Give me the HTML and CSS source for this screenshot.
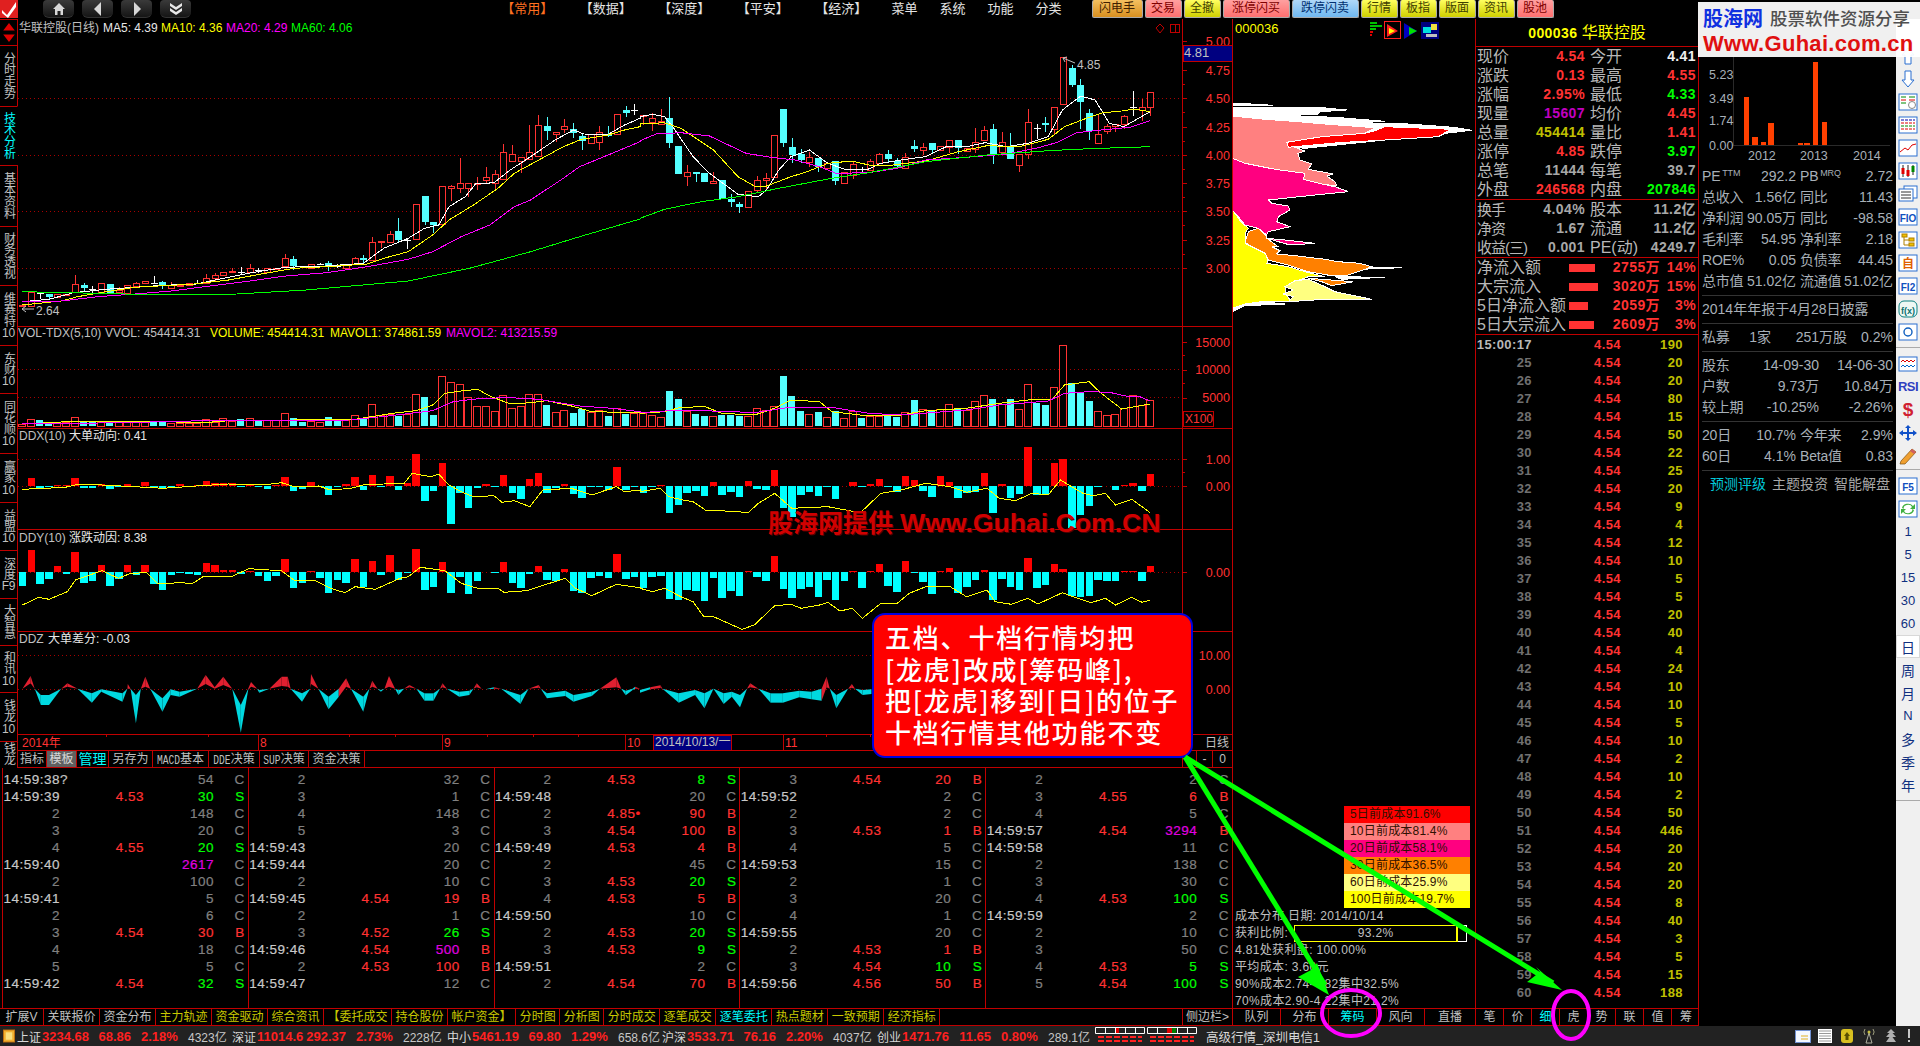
FILE: index.html
```html
<!DOCTYPE html>
<html lang="zh">
<head>
<meta charset="utf-8">
<title>华联控股 行情</title>
<link rel="stylesheet" href="styles.css">
</head>
<body>
<header class="topbar">
  <svg class="logo" viewBox="0 0 18 18"><rect width="18" height="18" fill="#e02020"/><path d="M2 10 L7 15 L16 2 L16 7 L8 18 L2 13Z" fill="#fff"/></svg>
  <nav class="navbtns">
    <span class="nb"><svg viewBox="0 0 16 14"><path d="M8 1 L14 7 H12 V13 H9.5 V9 H6.5 V13 H4 V7 H2Z" fill="#d8d8d8"/></svg></span>
    <span class="nb"><svg viewBox="0 0 16 14"><path d="M11 0 V14 L4 7Z" fill="#d8d8d8"/></svg></span>
    <span class="nb"><svg viewBox="0 0 16 14"><path d="M5 0 V14 L12 7Z" fill="#d8d8d8"/></svg></span>
    <span class="nb"><svg viewBox="0 0 16 14"><path d="M2 1 L8 5 L14 1 V4 L8 8 L2 4Z M2 6 L8 10 L14 6 V9 L8 13 L2 9Z" fill="#e8e8e8"/></svg></span>
  </nav>
  <div class="menus">
    <span class="mb orange">【常用】</span><span class="mb">【数据】</span><span class="mb">【深度】</span><span class="mb">【平安】</span><span class="mb">【经济】</span>
    <span class="mi">菜单</span><span class="mi">系统</span><span class="mi">功能</span><span class="mi">分类</span>
  </div>
  <div class="tbtns">
    <span class="tb w51 g-orange">闪电手</span><span class="tb w37 g-salmon">交易</span><span class="tb w37 g-yellow">全撤</span><span class="tb w67 g-salmon">涨停闪买</span><span class="tb w67 g-blue">跌停闪卖</span><span class="tb w37 g-yellow">行情</span><span class="tb w37 g-yellow">板指</span><span class="tb w37 g-yellow">版面</span><span class="tb w37 g-yellow">资讯</span><span class="tb w37 g-salmon">股池</span>
  </div>
</header>

<main class="main">
  <div class="workspace">
    <div class="upper">
      <section class="leftcol">
        <div class="chartrow">
          <aside class="vstrip">
            <div class="vt h26 updown"><svg viewBox="0 0 16 26"><path d="M8 3 L14 11 H2Z M2 15 H14 L8 23Z" fill="#e00000"/></svg></div>
            <div class="vt h61"><span class="vtx">分时走势</span></div>
            <div class="vt h59 cyan"><span class="vtx">技术分析</span></div>
            <div class="vt h61"><span class="vtx">基本资料</span></div>
            <div class="vt h59"><span class="vtx">财务透视</span></div>
            <div class="vt h60"><span class="vtx">维赛特</span><span>10</span></div>
            <div class="vt h48"><span class="vtx">东财</span><span>10</span></div>
            <div class="vt h60"><span class="vtx">同花顺</span><span>10</span></div>
            <div class="vt h49"><span class="vtx">赢家</span><span>10</span></div>
            <div class="vt h48"><span class="vtx">益盟</span><span>10</span></div>
            <div class="vt h48"><span class="vtx">深度</span><span>F9</span></div>
            <div class="vt h47"><span class="vtx">大智慧</span></div>
            <div class="vt h47"><span class="vtx">和讯</span><span>10</span></div>
            <div class="vt h49"><span class="vtx">钱龙</span><span>10</span></div>
            <div class="vt h27"><span class="vtx">钱龙</span></div>
          </aside>
          <div class="chartcol">
            <svg id="chart" class="chart" viewBox="18 19 1214 731" width="1214" height="731"></svg>
            <div class="ibar">
              <span class="it i29">指标</span><span class="it i30 sel">模板</span><span class="it i32 cyan">管理</span><span class="it i44">另存为</span><span class="it i56"><span class="mn">MACD</span>基本</span><span class="it i51"><span class="mn">DDE</span>决策</span><span class="it i49"><span class="mn">SUP</span>决策</span><span class="it i56">资金决策</span>
              <span class="it rc first"></span><span class="it rc">-</span><span class="it rc lastc">0</span>
            </div>
          </div>
        </div>
        <div id="ticks" class="ticks"></div>
      </section>

      <section class="chip">
        <svg id="chip" class="chipsvg" viewBox="1233 19 242 787" width="242" height="787"></svg>
        <div class="legend l1">5日前成本91.6%</div>
        <div class="legend l2">10日前成本81.4%</div>
        <div class="legend l3">20日前成本58.1%</div>
        <div class="legend l4">30日前成本36.5%</div>
        <div class="legend l5">60日前成本25.9%</div>
        <div class="legend l6">100日前成本19.7%</div>
        <div class="cinfo">成本分布,日期: 2014/10/14</div>
        <div class="cinfo cratio"><span>获利比例:</span><span class="rbox"><span class="rfill">93.2%</span></span></div>
        <div class="cinfo">4.81处获利盘: 100.00%</div>
        <div class="cinfo">平均成本: 3.60元</div>
        <div class="cinfo">90%成本2.74-4.82集中32.5%</div>
        <div class="cinfo short">70%成本2.90-4.22集中21.2%</div>
      </section>

      <section class="quote">
        <h1 class="qtitle"><b>000036</b> 华联控股</h1>
        <div class="qblock">
          <div class="q"><b>现价</b><i class="red">4.54</i><b>今开</b><i class="white">4.41</i></div>
          <div class="q"><b>涨跌</b><i class="red">0.13</i><b>最高</b><i class="red">4.55</i></div>
          <div class="q"><b>涨幅</b><i class="red">2.95%</i><b>最低</b><i class="green">4.33</i></div>
          <div class="q"><b>现量</b><i class="mag">15607</i><b>均价</b><i class="red">4.45</i></div>
          <div class="q"><b>总量</b><i class="olive">454414</i><b>量比</b><i class="red">1.41</i></div>
          <div class="q"><b>涨停</b><i class="red">4.85</i><b>跌停</b><i class="green">3.97</i></div>
          <div class="q"><b>总笔</b><i>11444</i><b>每笔</b><i>39.7</i></div>
          <div class="q"><b>外盘</b><i class="red">246568</i><b>内盘</b><i class="green">207846</i></div>
        </div>
        <div class="qblock b3">
          <div class="q"><b>换手</b><i>4.04%</i><b>股本</b><i>11.2亿</i></div>
          <div class="q"><b>净资</b><i>1.67</i><b>流通</b><i>11.2亿</i></div>
          <div class="q"><b>收益(三)</b><i>0.001</i><b>PE(动)</b><i>4249.7</i></div>
        </div>
        <div class="qblock">
          <div class="flow"><b>净流入额</b><span class="fbar b26"></span><i class="red">2755万</i><i class="red">14%</i></div>
          <div class="flow"><b>大宗流入</b><span class="fbar b29"></span><i class="red">3020万</i><i class="red">15%</i></div>
          <div class="flow"><b>5日净流入额</b><span class="fbar b19"></span><i class="red">2059万</i><i class="red">3%</i></div>
          <div class="flow"><b>5日大宗流入</b><span class="fbar b25"></span><i class="red">2609万</i><i class="red">3%</i></div>
        </div>
        <div id="qticks" class="qticks"></div>
      </section>
    </div>

    <div class="tabsrow">
      <div class="tabs t-left">
        <span class="tab t44">扩展V</span><span class="tab">关联报价</span><span class="tab">资金分布</span><span class="tab yl">主力轨迹</span><span class="tab yl">资金驱动</span><span class="tab yl">综合资讯</span><span class="tab yl">【委托成交</span><span class="tab yl">持仓股份</span><span class="tab yl">帐户资金】</span><span class="tab yl">分时图</span><span class="tab yl">分析图</span><span class="tab yl">分时成交</span><span class="tab yl">逐笔成交</span><span class="tab cyan">逐笔委托</span><span class="tab yl">热点题材</span><span class="tab yl">一致预期</span><span class="tab yl">经济指标</span>
        <span class="tab side">侧边栏&gt;</span>
      </div>
      <div class="tabs t-chip">
        <span class="tab c48">队列</span><span class="tab c48">分布</span><span class="tab c48 cyan">筹码</span><span class="tab c48">风向</span><span class="tab c51">直播</span>
      </div>
      <div class="tabs t-q">
        <span class="tab qt">笔</span><span class="tab qt">价</span><span class="tab qt cyan">细</span><span class="tab qt">虎</span><span class="tab qt">势</span><span class="tab qt">联</span><span class="tab qt">值</span><span class="tab qt">筹</span>
      </div>
    </div>
  </div>

  <section class="f10">
    <svg id="mini" class="mini" viewBox="1699 19 197 147" width="197" height="147"></svg>
    <div class="fr"><span class="fc"><span>PE<sup>TTM</sup></span><span>292.2</span></span><span class="fc"><span>PB<sup>MRQ</sup></span><span>2.72</span></span></div>
    <div class="fr"><span class="fc"><span>总收入</span><span>1.56亿</span></span><span class="fc"><span>同比</span><span>11.43</span></span></div>
    <div class="fr"><span class="fc"><span>净利润</span><span>90.05万</span></span><span class="fc"><span>同比</span><span>-98.58</span></span></div>
    <div class="fr"><span class="fc"><span>毛利率</span><span>54.95</span></span><span class="fc"><span>净利率</span><span>2.18</span></span></div>
    <div class="fr"><span class="fc"><span>ROE%</span><span>0.05</span></span><span class="fc"><span>负债率</span><span>44.45</span></span></div>
    <div class="fr"><span class="fc"><span>总市值</span><span>51.02亿</span></span><span class="fc"><span>流通值</span><span>51.02亿</span></span></div>
    <hr class="fd">
    <div class="fr one">2014年年报于4月28日披露</div>
    <hr class="fd">
    <div class="fr pm"><span>私募</span><span>1家</span><span>251万股</span><span>0.2%</span></div>
    <hr class="fd">
    <div class="fr sh"><span>股东</span><span>14-09-30</span><span>14-06-30</span></div>
    <div class="fr sh"><span>户数</span><span>9.73万</span><span>10.84万</span></div>
    <div class="fr sh"><span>较上期</span><span>-10.25%</span><span>-2.26%</span></div>
    <hr class="fd">
    <div class="fr"><span class="fc"><span>20日</span><span>10.7%</span></span><span class="fc"><span>今年来</span><span>2.9%</span></span></div>
    <div class="fr"><span class="fc"><span>60日</span><span>4.1%</span></span><span class="fc"><span>Beta值</span><span>0.83</span></span></div>
    <hr class="fd">
    <div class="fr links"><span class="tq">预测评级</span><span>主题投资</span><span>智能解盘</span></div>
  </section>

  <aside class="icons">
    <div class="ic"><svg viewBox="0 0 20 18"><path d="M10 1 L16 8 H13 V17 H7 V8 H4Z" fill="#fff" stroke="#2a6fd0"/></svg></div>
    <div class="ic"><svg viewBox="0 0 20 18"><path d="M10 17 L16 10 H13 V1 H7 V10 H4Z" fill="#fff" stroke="#2a6fd0"/></svg></div>
    <div class="ic"><svg viewBox="0 0 20 18"><rect x="1" y="1" width="18" height="16" fill="#fff" stroke="#2a6fd0"/><path d="M3 4H8M11 4H17" stroke="#080"/><path d="M3 7H8M11 7H17" stroke="#d00"/><path d="M3 10H8" stroke="#080"/><circle cx="14" cy="12" r="3.5" fill="none" stroke="#888"/></svg></div>
    <div class="ic"><svg viewBox="0 0 20 18"><rect x="1" y="1" width="18" height="16" fill="#fff" stroke="#2a6fd0"/><path d="M3 4H17" stroke="#00a" stroke-dasharray="3 1"/><path d="M3 7H17" stroke="#d00" stroke-dasharray="3 1"/><path d="M3 10H17" stroke="#080" stroke-dasharray="3 1"/><path d="M3 13H17" stroke="#d00" stroke-dasharray="3 1"/></svg></div>
    <div class="ic"><svg viewBox="0 0 20 18"><rect x="1" y="1" width="18" height="16" fill="#fff" stroke="#2a6fd0"/><path d="M2 13 L7 9 L10 11 L14 6 L18 5" fill="none" stroke="#e00000"/></svg></div>
    <div class="ic"><svg viewBox="0 0 20 18"><rect x="1" y="1" width="18" height="16" fill="#fff" stroke="#2a6fd0"/><path d="M5 3V15M10 3V15M15 3V13" stroke="#222"/><rect x="3.5" y="6" width="3" height="6" fill="#e00000"/><rect x="8.500" y="8" width="3" height="6" fill="#e00000"/><rect x="13.500" y="4" width="3" height="6" fill="#080"/></svg></div>
    <div class="ic"><svg viewBox="0 0 20 18"><rect x="6" y="1" width="13" height="12" fill="#fff" stroke="#2a6fd0"/><rect x="1" y="4" width="14" height="12" fill="#fff" stroke="#2a6fd0"/><path d="M3 7H13M3 10H13M3 13H13" stroke="#333"/></svg></div>
    <div class="ic"><svg viewBox="0 0 20 18"><rect x="1" y="1" width="18" height="16" fill="#fff" stroke="#2a6fd0"/><text x="10" y="13.500" class="ictext">FIO</text></svg></div>
    <div class="ic"><svg viewBox="0 0 20 18"><rect x="1" y="1" width="18" height="16" fill="#fff" stroke="#2a6fd0"/><rect x="4" y="3" width="5" height="3" fill="#f0c000" stroke="#b08000"/><rect x="11" y="7" width="5" height="3" fill="#f0c000" stroke="#b08000"/><rect x="11" y="12" width="5" height="3" fill="#f0c000" stroke="#b08000"/><path d="M6 6V14H11M6 9H11" fill="none" stroke="#b08000"/></svg></div>
    <div class="ic"><svg viewBox="0 0 20 18"><rect x="1" y="1" width="18" height="16" fill="#fff" stroke="#2a6fd0"/><text x="10" y="14" class="ictext orange-t">自</text></svg></div>
    <div class="ic"><svg viewBox="0 0 20 18"><rect x="1" y="1" width="18" height="16" fill="#fff" stroke="#2a6fd0"/><text x="10" y="13.500" class="ictext">FI2</text></svg></div>
    <div class="ic"><svg viewBox="0 0 20 18"><rect x="1" y="1" width="18" height="16" rx="5" fill="#eef8f4" stroke="#0a8080"/><text x="10" y="13.500" class="ictext teal">f(x)</text></svg></div>
    <div class="ic"><svg viewBox="0 0 20 18"><rect x="1" y="1" width="18" height="16" fill="#fff" stroke="#2a6fd0"/><circle cx="10" cy="9" r="4" fill="none" stroke="#1060c0" stroke-width="1.400"/></svg></div>
    <hr class="isep s1">
    <div class="ic"><svg viewBox="0 0 20 18"><rect x="1" y="2" width="18" height="14" fill="#fff" stroke="#2a6fd0"/><path d="M3 7 L5 5 L7 7 L9 5 L11 7 L13 5 L15 7 L17 5" fill="none" stroke="#d00"/><path d="M3 12 L5 10 L7 12 L9 10 L11 12 L13 10 L15 12 L17 10" fill="none" stroke="#06c"/></svg></div>
    <div class="ic"><span class="rsi">RSI</span></div>
    <div class="ic"><span class="dollar">$</span></div>
    <div class="ic"><svg viewBox="0 0 20 18"><path d="M10 1 L13 4 H11 V8 H15 V6 L19 9 L15 12 V10 H11 V14 H13 L10 17 L7 14 H9 V10 H5 V12 L1 9 L5 6 V8 H9 V4 H7Z" fill="#1050c8"/></svg></div>
    <div class="ic"><svg viewBox="0 0 20 18"><path d="M3 14 L14 2 L18 5 L7 17 L2 17Z" fill="#f0a030" stroke="#805010" stroke-width=".7"/><path d="M14 2 L18 5 L16 7 L12 4Z" fill="#d06060"/></svg></div>
    <hr class="isep s2">
    <div class="ic"><svg viewBox="0 0 20 18"><rect x="1" y="1" width="18" height="16" fill="#fff" stroke="#2a6fd0"/><text x="10" y="13.500" class="ictext">F5</text></svg></div>
    <div class="ic"><svg viewBox="0 0 20 18"><rect x="1" y="1" width="18" height="16" fill="#fff" stroke="#2a6fd0"/><path d="M4 8 A6 5 0 0 1 15 6 L17 4 V9 H12 L14 7 A4 3 0 0 0 6 9Z M16 10 A6 5 0 0 1 5 12 L3 14 V9 H8 L6 11 A4 3 0 0 0 14 9Z" fill="#40b040"/></svg></div>
    <div class="ic num">1</div><div class="ic num">5</div><div class="ic num">15</div><div class="ic num">30</div><div class="ic num">60</div>
    <div class="ic num zh active">日</div><div class="ic num zh">周</div><div class="ic num zh">月</div><div class="ic num">N</div><div class="ic num zh">多</div><div class="ic num zh">季</div><div class="ic num zh">年</div>
    <hr class="isep">
  </aside>
</main>

<footer class="status">
  <svg class="sicon" viewBox="0 0 13 14"><rect x=".5" y=".5" width="12" height="13" fill="#f0b030" stroke="#c07010"/><rect x="3" y="3" width="7" height="8" fill="#f8e080"/></svg>
  <div class="idx"><span class="nm">上证</span><b>3234.68</b><b class="chg">68.86</b><b class="pct">2.18%</b><span class="amt">4323亿</span></div>
  <div class="idx"><span class="nm">深证</span><b>11014.6</b><b class="chg">292.37</b><b class="pct">2.73%</b><span class="amt">2228亿</span></div>
  <div class="idx"><span class="nm">中小</span><b>5461.19</b><b class="chg">69.80</b><b class="pct">1.29%</b><span class="amt">658.6亿</span></div>
  <div class="idx"><span class="nm">沪深</span><b>3533.71</b><b class="chg">76.16</b><b class="pct">2.20%</b><span class="amt">4037亿</span></div>
  <div class="idx idx5"><span class="nm">创业</span><b>1471.76</b><b class="chg">11.65</b><b class="pct">0.80%</b><span class="amt">289.1亿</span></div>
  <svg class="wd" viewBox="0 0 50 18"><g fill="none" stroke="#fff"><path d="M.5 .5H49.500V6.500H.5ZM10.500 .5V6.500M20.500 .5V6.500M30.500 .5V6.500M40.500 .5V6.500"/></g><rect x="21" y="1" width="3" height="5" fill="#e00000"/><path d="M3 10H47M3 14H47" stroke="#ff2020" stroke-width="2" stroke-dasharray="6 2"/></svg>
  <svg class="wd" viewBox="0 0 50 18"><g fill="none" stroke="#fff"><path d="M.5 .5H49.500V6.500H.5ZM10.500 .5V6.500M20.500 .5V6.500M30.500 .5V6.500M40.500 .5V6.500"/></g><rect x="20" y="1" width="5" height="5" fill="#e00000"/><rect x="25" y="1" width="4" height="5" fill="#008000"/><path d="M3 10H47M3 14H47" stroke="#ff2020" stroke-width="2" stroke-dasharray="6 2"/></svg>
  <span class="srv">高级行情_深圳电信1</span>
  <span class="sright">
    <svg viewBox="0 0 16 16"><rect x=".5" y="2.500" width="15" height="12" fill="#f4f8ff" stroke="#7090d0"/><path d="M6 8H13M6 11H13" stroke="#e0b020"/></svg>
    <svg viewBox="0 0 16 16"><rect x="1" y="1" width="14" height="14" fill="#fff"/><path d="M2 3H14M2 5.500H14M2 8H14M2 10.500H14M2 13H14" stroke="#999"/></svg>
    <svg viewBox="0 0 16 16"><rect x="2" y="1" width="12" height="14" rx="3" fill="#d8c020"/><path d="M8 4 L11 8 H9.500 V12 H6.500 V8 H5Z" fill="#5a5000"/></svg>
    <svg viewBox="0 0 16 16"><path d="M8 5 L5 15 H11Z M8 9H8" fill="none" stroke="#b0b0a0"/><circle cx="8" cy="4" r="1.500" fill="#c8c040"/><path d="M4 1 A5 5 0 0 0 4 7 M12 1 A5 5 0 0 1 12 7" fill="none" stroke="#a0a080"/></svg>
    <svg viewBox="0 0 16 16"><path d="M8 1 L12 5 H9.500 L13 9 H9.500 L13 14 H3 L6.500 9 H3 L6.500 5 H4Z" fill="#b0b0b0"/></svg>
    <svg viewBox="0 0 8 16"><rect x="3" y="1" width="2" height="9" fill="#c8c8c8"/><rect x="3" y="12" width="2" height="2" fill="#c8c8c8"/></svg>
  </span>
</footer>

<svg class="overlay" viewBox="0 0 1920 1046" width="1920" height="1046">
  <path d="M1185 757 L1553 983" stroke="#00ff00" stroke-width="5" fill="none"/>
  <path d="M1562 990 L1527 982 L1540 972 L1536 967Z" fill="#00ff00"/>
  <path d="M1185 757 L1325 985" stroke="#00ff00" stroke-width="5" fill="none"/>
  <path d="M1329 995 L1298 977 L1311 970 L1317 963Z" fill="#00ff00"/>
  <ellipse cx="1351" cy="1013" rx="29" ry="23" fill="none" stroke="#ff00ff" stroke-width="4"/>
  <ellipse cx="1571" cy="1015" rx="18" ry="24" fill="none" stroke="#ff00ff" stroke-width="4"/>
</svg>

<div class="callout">五档、十档行情均把<br>[龙虎]改成[筹码峰],<br>把[龙虎]移到[日]的位子<br>十档行情其他功能不变</div>
<div class="wm-red">股海网提供 <span class="wm-lat">Www.Guhai.Com.CN</span></div>
<div class="wm-top"><div class="wm1"><span class="wm-blue">股海网</span><span class="wm-gray">股票软件资源分享</span></div><div class="wm2">Www.Guhai.com.cn</div></div>

<script src="app.js"></script>
</body>
</html>
```
FILE: styles.css
```css
* { box-sizing: border-box; }
html, body { margin: 0; padding: 0; background: #000; }
body {
  width: 1920px; height: 1046px; overflow: hidden; position: relative;
  font: 12px "Liberation Sans", "Noto Sans CJK SC", sans-serif;
  color: #c0c0c0;
}
svg { display: block; }
.cyan { color: #00ffff; }

/* top bar */
.topbar { height: 19px; display: flex; align-items: flex-start; background: #000; }
.logo { width: 18px; height: 18px; flex: none; }
.navbtns { display: flex; gap: 8px; margin-left: 25px; flex: none; }
.nb {
  width: 31px; height: 18px; display: flex; align-items: center; justify-content: center;
  background: linear-gradient(#3a3a3a, #151515); border-radius: 4px 4px 6px 6px; border-bottom: 1px solid #333;
}
.nb svg { width: 16px; height: 14px; }
.menus { display: flex; margin-left: 297px; flex: none; line-height: 18px; font-size: 13px; color: #e4e4e4; }
.mb { width: 78.500px; text-align: center; }
.mi { width: 48px; text-align: center; }
.orange { color: #ff7020; }
.tbtns { display: flex; gap: 2px; margin-left: 19px; flex: none; }
.tb {
  height: 18px; line-height: 17px; text-align: center; font-size: 12px; color: #402000;
  border-radius: 2px; border: 1px solid #aaa; border-top: 0; letter-spacing: 0;
}
.w51 { width: 51px; } .w37 { width: 37px; } .w67 { width: 67px; }
.g-orange { background: linear-gradient(#f4c060, #d89020); }
.g-salmon { background: linear-gradient(#ffa0a0, #ff7070); color: #800000; }
.g-yellow { background: linear-gradient(#ffff60, #d0d000); color: #404000; }
.g-blue { background: linear-gradient(#b0d8f8, #70b8f0); color: #003070; }

/* frame */
.main { display: flex; height: 1007px; }
.workspace { width: 1699px; flex: none; display: flex; flex-direction: column; }
.upper { display: flex; height: 989px; }
.leftcol { width: 1233px; flex: none; border-right: 1px solid #c00000; display: flex; flex-direction: column; }
.chartrow { display: flex; height: 749px; }
.vstrip { width: 18px; flex: none; overflow: hidden; }
.vt {
  width: 18px; border-right: 1px solid #c00000; border-top: 1px solid #c00000;
  display: flex; flex-direction: column; align-items: center; justify-content: center;
  overflow: hidden; font-size: 12px; line-height: 12px; color: #c0c0c0; letter-spacing: -.2px;
}
.vt.cyan { color: #00ffff; border-right-color: #000; }
.vtx { writing-mode: vertical-rl; text-orientation: upright; line-height: 16px; }
.updown svg { width: 16px; height: 26px; }
.h26 { height: 26px; } .h27 { height: 27px; justify-content: flex-start; } .h47 { height: 47px; } .h48 { height: 48px; } .h49 { height: 49px; }
.h59 { height: 59px; } .h60 { height: 60px; } .h61 { height: 61px; }
.chartcol { width: 1214px; flex: none; display: flex; flex-direction: column; }
.chart { flex: none; }

/* svg text */
.t { font: 12px "Liberation Sans", "Noto Sans CJK SC", sans-serif; }
.tax { font: 12.500px "Liberation Sans", sans-serif; fill: #ff3232; text-anchor: end; }
.fw { fill: #e8e8e8; } .fa { fill: #c0c0c0; } .fr-t { fill: #ff3232; } .fy { fill: #ffff00; } .fm { fill: #ff00ff; } .fg { fill: #00ff00; }
.mono { font: 13px "Liberation Sans", sans-serif; }
.minit { font: 12.500px "Liberation Sans", sans-serif; fill: #a8b0b8; }

/* indicator tab bar */
.ibar { height: 18px; display: flex; border-top: 1px solid #c00000; border-bottom: 1px solid #c00000; font-size: 12px; line-height: 16px; }
.it { border-right: 1px solid #c00000; flex: none; color: #c0c0c0; text-align: center; white-space: nowrap; }
.i29 { width: 29px; } .i30 { width: 30px; } .i32 { width: 32px; font-size: 14px; } .i44 { width: 44px; } .i49 { width: 49px; } .i51 { width: 51px; } .i56 { width: 56px; }
.mn { font: 9.600px "Liberation Mono", monospace; display: inline-block; transform: scale(1, 1.35); }
.it.sel { background: #606060; color: #d8d8d8; }
.it.cyan { color: #00ffff; }
.it.rc { width: 16px; padding: 0; text-align: center; border-right: 1px solid #c00000; }
.it.first { margin-left: auto; width: 15px; border-left: 1px solid #c00000; }
.it.lastc { width: 19px; border-right: 0; }

/* tick grids */
.ticks { height: 240px; display: grid; grid-template-columns: repeat(5, 1fr); border-left: 1px solid #c00000; margin-left: 2px; }
.tcol { border-right: 1px solid #c00000; padding-top: 2.500px; }
.tcol:last-child { border-right: 0; }
.tr { display: grid; grid-template-columns: 57px 84px 70px 1fr; height: 17px; font: 13.500px/17px "Liberation Sans", sans-serif; letter-spacing: .5px; -webkit-text-stroke: .2px; }
.tr span { text-align: right; }
.tr .tm { color: #808080; }
.tr .tm.full { color: #c8c8c8; }
.tr .pr { color: #ff3232; }
.tr .fl { padding-right: 3px; }
.cg { color: #808080; } .cr { color: #ff3232; } .cgn { color: #00ff00; } .cm { color: #e000e0; }
.mark { display: inline-block; width: 0; overflow: visible; white-space: nowrap; color: #c0c0c0; }
.mark.dot { color: #ff2020; }

/* chip panel */
.chip { width: 243px; flex: none; border-right: 1px solid #c00000; display: flex; flex-direction: column; }
.chipsvg { flex: none; }
.legend { height: 17px; width: 126px; margin-left: 111px; padding-left: 6px; color: #301000; line-height: 17px; font-size: 12px; letter-spacing: .2px; }
.l1 { background: #ff0000; } .l2 { background: #ff8080; } .l3 { background: #ff0080; } .l4 { background: #ff8000; } .l5 { background: #ffff80; } .l6 { background: #ffff00; }
.cinfo { height: 17px; line-height: 17px; padding-left: 2px; font-size: 12px; color: #c0c0c0; white-space: nowrap; letter-spacing: .35px; }
.cinfo.short { height: 15px; }
.cratio { display: flex; }
.rbox { display: block; margin-left: 6px; width: 173px; height: 17px; border: 1px solid #fff; }
.rfill { display: block; width: 162px; height: 15px; border: 1px solid #ffff00; border-width: 0 1px 0 0; text-align: center; line-height: 15px; outline: 1px solid #ffff00; outline-offset: 0; }

/* quote panel */
.quote { width: 223px; flex: none; border-right: 1px solid #c00000; display: flex; flex-direction: column; }
.qtitle { margin: 0; height: 28px; line-height: 27px; text-align: center; font-size: 16px; font-weight: 400; color: #ffff00; border-bottom: 1px solid #c00000; }
.qtitle b { font: bold 14px "Liberation Sans", sans-serif; letter-spacing: .4px; }
.qblock { border-bottom: 1px solid #c00000; }
.q { display: grid; grid-template-columns: 40px 68px 38px 1fr; padding: 0 2px 0 1px; height: 19px; line-height: 19px; }
.q b, .flow b { font-weight: 400; font-size: 16px; line-height: 19px; color: #b8b8b8; white-space: nowrap; }
.q b:nth-child(3) { padding-left: 5px; }
.q i, .flow i { font: bold 14px/19px "Liberation Sans", "Noto Sans CJK SC", sans-serif; color: #a8a8a8; text-align: right; white-space: nowrap; letter-spacing: .4px; }
.q i.red, .flow i.red { color: #ff3232; } .q i.white { color: #f0f0f0; } .q i.green { color: #00ff00; } .q i.mag { color: #c000c0; } .q i.olive { color: #c0c000; }
.b3 .q b:first-child { letter-spacing: -1px; font-size: 15px; }
.flow { display: grid; grid-template-columns: 92px 35px 1fr 36px; grid-auto-rows: 19px; height: 19px; padding: 0 2px 0 1px; align-items: center; }
.fbar { display: block; height: 8px; background: #ff3232; }
.b26 { width: 26px; } .b29 { width: 29px; } .b19 { width: 19px; } .b25 { width: 25px; }
.qticks { padding-top: 1px; }
.qr { display: grid; grid-template-columns: 56px 89px 62px; height: 18px; font: bold 13px/18px "Liberation Sans", sans-serif; letter-spacing: .4px; }
.qr span { text-align: right; }
.qr .s { color: #707070; } .qr .s.full { color: #b8b8b8; } .qr .p { color: #ff3232; } .qr .v { color: #c0c000; }

/* bottom tabs */
.tabsrow { display: flex; height: 18px; border-top: 1px solid #c00000; border-bottom: 1px solid #c00000; }
.tabs { display: flex; flex: none; font-size: 12px; line-height: 16px; }
.t-left { width: 1233px; border-right: 1px solid #c00000; }
.t-chip { width: 243px; border-right: 1px solid #c00000; }
.t-q { width: 223px; border-right: 1px solid #c00000; }
.tab { flex: none; padding: 0 3.500px; border-right: 1px solid #c00000; text-align: center; color: #c0c0c0; }
.tab.t44 { width: 44px; padding: 0; }
.tab.yl { color: #c8c800; }
.tab.cyan { color: #00ffff; }
.tab.side { margin-left: auto; width: 50px; padding: 0; border-left: 1px solid #c00000; border-right: 0; }
.c48 { width: 48px; padding: 0; } .c51 { width: 50px; padding: 0; border-right: 0; }
.qt { width: 28px; padding: 0; }
.qt:last-child { border-right: 0; }

/* f10 */
.f10 { width: 197px; flex: none; padding: 0 3px; color: #a8b0b8; font-size: 14px; }
.mini { margin: 0 -3px; }
.fr { display: grid; grid-template-columns: 94px 93px; gap: 4px; height: 21px; line-height: 21px; white-space: nowrap; }
.fr.one { display: block; }
.fr.links { display: flex; gap: 6px; padding-left: 8px; color: #a8a8a8; }
.fc { display: flex; justify-content: space-between; }
.fc > span:first-child, .sh > span:first-child, .pm > span:first-child { letter-spacing: -.2px; }
sup { font-size: 9px; line-height: 0; vertical-align: 5px; margin-left: 2px; }
.fd { border: 0; height: 1px; background: #333; margin: 3px 0; }
.pm { grid-template-columns: 28px 41px 76px 1fr; gap: 0; text-align: right; }
.pm > span:first-child { text-align: left; }
.sh { grid-template-columns: 40px 77px 1fr; gap: 0; text-align: right; }
.sh > span:first-child { text-align: left; }
.tq { color: #00c8d8; }

/* icon column */
.icons { width: 24px; flex: none; background: #f0f0f0; padding-top: 25px; }
.ic { height: 23px; display: flex; align-items: center; justify-content: center; color: #103080; font-size: 12px; }
.ic svg { width: 20px; height: 18px; }
.ic.num { font-size: 13px; }
.ic.zh { font-size: 14px; }
.ic.active { background: #fff; border: 1px solid #d8d8d8; }
.isep { border: 0; height: 1px; background: #aaa; margin: 4px 0; }
.isep.s2 { margin: 2px 0 4px; }
.ictext { font: bold 10px "Liberation Sans", "Noto Sans CJK SC", sans-serif; fill: #1050c0; text-anchor: middle; }
.orange-t { fill: #e06000; font-size: 12px; }
.teal { fill: #0a7070; font-size: 9px; }
.rsi { font: bold 13px "Liberation Sans", sans-serif; color: #3040c0; letter-spacing: -.5px; }
.dollar { font: bold 19px "Liberation Sans", sans-serif; color: #d02030; }

/* status */
.status { height: 20px; background: #222; display: flex; align-items: center; padding-left: 3px; }
.sicon { width: 12px; height: 14px; flex: none; margin-right: 2px; }
.idx { width: 215px; flex: none; display: grid; grid-template-columns: 25px 57px 32px 57px 1fr; align-items: center; font-size: 12px; white-space: nowrap; }
.idx5 { width: 218px; }
.idx b { color: #ff2020; font: bold 13px "Liberation Sans", sans-serif; }
.idx .chg { justify-self: end; }
.idx .pct { padding-left: 10px; }
.nm { color: #d8d8d8; }
.amt { color: #c8c8c8; }
.wd { width: 50px; height: 18px; flex: none; margin-right: 2px; }
.srv { margin-left: 7px; color: #d8d8d8; font-size: 12.500px; white-space: nowrap; }
.sright { margin-left: auto; display: flex; gap: 6px; align-items: center; padding-right: 7px; }
.sright svg { width: 16px; height: 16px; }
.sright svg:last-child { width: 8px; }

/* overlays */
.overlay { position: absolute; left: 0; top: 0; z-index: 3; pointer-events: none; }
.callout {
  position: absolute; left: 872px; top: 613px; width: 321px; height: 145px; z-index: 2;
  background: #ff0000; border: 2px solid #0000e0; border-radius: 13px; padding: 6px 0 0 11px;
  color: #fff; font: 500 26px/31.700px "Noto Sans CJK SC", sans-serif; letter-spacing: 1.800px; white-space: nowrap;
}
.wm-red {
  position: absolute; left: 768px; top: 507px; z-index: 1; white-space: nowrap;
  font: bold 25px/32px "Liberation Sans", "Noto Sans CJK SC", sans-serif; color: #d00000; text-shadow: 1px 1px 0 #500000;
}
.wm-lat { font-size: 26.600px; }
.wm-top { position: absolute; left: 1698px; top: 2px; width: 222px; height: 55px; z-index: 4; background: rgba(255, 255, 255, .94); padding-left: 5px; overflow: hidden; }
.wm1 { display: flex; align-items: center; height: 30px; }
.wm-blue { font: bold 20px "Noto Sans CJK SC", sans-serif; color: #1030e0; width: 67px; white-space: nowrap; }
.wm-gray { font: 500 17.500px "Noto Sans CJK SC", sans-serif; color: #505050; white-space: nowrap; }
.wm2 { font: bold 22px/24px "Liberation Sans", sans-serif; color: #e01010; letter-spacing: .3px; white-space: nowrap; }
```
FILE: app.js
```js
const NS = 'http://www.w3.org/2000/svg';
const chart = document.getElementById('chart');
function el(name, attrs, text, parent) {
  const e = document.createElementNS(NS, name);
  for (const k in attrs) e.setAttribute(k, attrs[k]);
  if (text !== undefined) e.textContent = text;
  (parent || chart).appendChild(e);
  return e;
}
const RED = '#ff3232', CY = '#54ffff', GRID = '#a80000', LINE = '#c00000';
const X = i => 22.4 + 8.743 * i;
function line(x1, y1, x2, y2, stroke, extra, parent) {
  return el('line', Object.assign({ x1, y1, x2, y2, stroke, 'shape-rendering': 'crispEdges' }, extra || {}), undefined, parent);
}
function text(x, y, s, cls, parent) { return el('text', { x, y, class: cls }, s, parent); }
const poly = (pts1, pts2, off) => pts1.map(p => `${(p[0] / 2.45).toFixed(1)},${(p[1] / 3 + off).toFixed(1)}`)
  .concat(pts2.map(p => `${(640 + p[0] / 2.45).toFixed(1)},${(p[1] / 3 + off).toFixed(1)}`)).join(' ');
function pl(pts, stroke) { el('polyline', { points: pts, fill: 'none', stroke, 'shape-rendering': 'crispEdges' }); }

/* frame lines */
[326, 428, 529, 631, 734].forEach(y => line(18, y + .5, 1232, y + .5, LINE));
line(1182.5, 19, 1182.5, 750, LINE);
[97.7, 154.5, 211, 267.5, 369, 397, 459, 485.7, 572.3, 655, 688.7].forEach(y =>
  line(18, Math.round(y) + .5, 1182, Math.round(y) + .5, GRID, { 'stroke-dasharray': '1 3' }));

/* axis */
const axis = [[41, '5.00'], [70, '4.75'], [98, '4.50'], [127, '4.25'], [155, '4.00'], [183, '3.75'], [211, '3.50'], [240, '3.25'], [268, '3.00'],
  [342, '15000'], [369.5, '10000'], [397.5, '5000'], [459, '1.00'], [486, '0.00'], [572, '0.00'], [655, '10.00'], [689, '0.00']];
axis.forEach(a => {
  text(1230, a[0] + 4.5, a[1], 'tax');
  line(1182, Math.round(a[0]) + .5, 1187, Math.round(a[0]) + .5, LINE);
});
[55, 84, 112, 141, 169, 197, 225, 254, 355, 383, 472].forEach(y => line(1182, y + .5, 1185, y + .5, LINE));
el('rect', { x: 1183, y: 45, width: 49, height: 16, fill: '#000080', stroke: LINE, 'shape-rendering': 'crispEdges' });
text(1184, 57, '4.81', 'mono fa');
el('rect', { x: 1183.5, y: 411, width: 30, height: 15, fill: 'none', stroke: LINE, 'shape-rendering': 'crispEdges' });
text(1185, 423, 'X100', 't fr-t');
el('path', { d: 'M1160 24 L1164 28 L1160 33 L1156 28Z', fill: 'none', stroke: '#c00000' });
el('path', { d: 'M1170.5 24.500H1179.500V32.500H1170.500ZM1175 24.500V32.500', fill: 'none', stroke: '#c00000', 'shape-rendering': 'crispEdges' });

/* titles */
[[19, 28, '华联控股(日线)', 'fa'], [103, 28, 'MA5: 4.39', 'fw'], [161, 28, 'MA10: 4.36', 'fy'], [226, 28, 'MA20: 4.29', 'fm'], [291, 28, 'MA60: 4.06', 'fg'],
 [18, 333, 'VOL-TDX(5,10)', 'fa'], [105, 333, 'VVOL: 454414.31', 'fa'], [210, 333, 'VOLUME: 454414.31', 'fy'], [330, 333, 'MAVOL1: 374861.59', 'fy'], [446, 333, 'MAVOL2: 413215.59', 'fm'],
 [19, 436, 'DDX(10)', 'fa'], [69, 436, '大单动向: 0.41', 'fw'],
 [19, 538, 'DDY(10)', 'fa'], [69, 538, '涨跌动因: 8.38', 'fw'],
 [19, 639, 'DDZ', 'fa'], [48, 639, '大单差分: -0.03', 'fw']
].forEach(a => { text(a[0], a[1] + 4, a[2], 't ' + a[3]); });

/* candles: type, bodyTop, bodyBottom, wickTop, wickBottom (zoom units, y / 3 = px) */
const C = [['r',915,919],['r',876,918],['w',880,880,879,897],['c',882,891,882,900],['r',884,892],['r',882,886],['r',853,878,825,878],['c',855,864,850,872],['w',869,869,858,878],['r',851,877],
['c',852,878],['r',871,878,862,880],['r',856,879],['r',850,858,845,860],['r',843,849],['w',851,851,828,853],['c',847,857,842,867],['r',857,866,847,866],['r',856,858],['r',851,855],
['w',850,850,840,853],['r',835,850,822,850],['r',826,836,820,842],['r',817,827],['r',814,818,803,818],['w',817,817,801,825],['r',805,817,793,817],['w',812,812,803,820],['r',806,818],['r',804,806],
['r',775,800,762,800],['c',778,798,768,810],['w',800,800,798,802],['r',794,805],['w',792,792,788,795],['c',790,798,784,812],['w',800,800,793,805],['r',796,806],['r',775,794,770,794],['c',773,780,765,792],
['r',727,780,712,780],['r',724,728,722,744],['r',703,728,693,728],['c',693,720,655,725],['w',720,720,715,748],['r',613,718],['c',588,666,588,675],['c',667,675,665,698],['r',559,674],['r',560,566,555,602],
['r',550,565,475,580],['r',550,566,550,590],['r',551,553,530,570],['r',532,541,502,550],['r',523,551,510,570],['r',457,538,433,538],['r',463,485,435,485],['r',472,485,472,520],['r',457,477,375,477],['r',376,470,345,470],
['c',378,392,350,420],['r',397,404,397,425],['r',379,388,357,400],['c',387,399,370,415],['c',408,422,400,450],['r',402,429],['r',397,428,378,450],['c',403,406,378,410],['r',343,403],['c',330,340,318,350],
['w',330,330,312,345],['r',345,349,345,375],['r',355,367,340,392],['r',365,372,328,372],['c',354,430,292,443],['c',438,522],['r',517,530,495,557],['c',516,521,516,545],['c',519,546],['r',544,551,516,551],
['c',541,598],['c',597,605,583,620],['c',611,622,605,638],['r',574,623],['r',541,572,528,578],['r',536,542,520,570],['r',406,531],['c',328,430,328,440],['c',441,465,415,490],['c',462,480,448,490],
['r',472,486,455,500],['c',473,502,473,515],['r',490,506],['c',484,543,484,555],['r',517,551],['r',493,525,485,538],['w',507,507,500,516],['r',484,510,476,510],['r',462,490,460,490],['c',462,477,450,490],
['c',484,499,475,505],['r',472,506,460,506],['c',438,447,420,456],['r',442,450,430,465],['c',430,450,430,462],['r',438,452],['r',422,442,422,460],['c',421,445,421,462],['r',444,454],['r',428,447,385,460],
['r',391,422,378,422],['c',387,463,372,492],['r',428,458,397,458],['c',442,476,400,477],['r',463,497,463,516],['r',367,462,328,477],['w',386,386,372,418],['c',370,376,352,395],['r',322,388,322,406],['r',172,314],
['c',205,255,195,260],['c',255,305,238,387],['c',340,393,328,420],['r',402,431,345,431],['r',379,394,372,402],['r',373,379,373,395],['r',349,374,345,388],['w',323,323,272,348],['r',322,330,297,362],['r',277,322,277,347]];

/* volume tops, zoom units: base 288 */
const V = [283,268,270,278,277,278,262,275,275,276,274,278,276,276,278,276,276,279,279,279,279,268,277,265,275,268,265,272,272,272,250,264,276,274,276,260,268,272,257,268,223,255,252,258,252,193,201,255,140,157,163,202,229,229,243,196,235,229,193,193,225,247,241,249,237,247,241,259,235,251,250,
250,255,262,183,207,243,252,258,259,255,256,258,258,235,240,229,138,198,243,253,246,262,243,265,243,263,258,258,252,260,247,210,238,243,238,223,238,240,213,196,207,223,207,238,163,218,225,172,46,160,185,213,245,255,253,235,196,226,211];
const cyanVol = new Set([2,3,7,8,10,15,16,25,27,31,32,35,36,39,43,46,47,60,63,64,67,69,74,75,77,78,80,81,82,87,88,89,91,93,96,99,100,102,104,107,111,113,116,117,120,121,122]);

const DX = [467,445,473,472,465,464,445,474,474,461,477,471,463,471,456,471,477,471,463,470,464,453,459,459,459,471,461,471,477,464,442,483,477,456,470,495,471,463,442,480,435,470,438,480,459,373,513,483,399,582,488,534,474,462,471,435,489,507,447,429,489,474,462,492,504,471,471,480,411,480,470,
488,471,464,549,525,489,483,498,456,495,486,501,453,477,480,420,534,560,495,486,498,472,507,468,456,471,462,447,471,487,438,450,483,501,438,456,504,489,486,429,549,462,504,492,351,495,495,399,387,594,555,528,472,468,480,465,459,483,432];
const DY = [767,660,762,747,708,732,666,759,753,705,768,747,705,735,705,762,780,735,730,733,735,699,705,720,720,733,724,738,753,738,687,774,759,723,744,789,750,759,687,771,693,735,675,750,730,657,780,771,696,789,741,792,753,725,730,696,759,774,731,708,750,753,717,783,789,744,738,744,672,747,741,
775,742,738,807,810,780,783,813,743,804,783,798,724,741,753,678,777,804,777,771,801,750,810,753,724,774,724,702,768,786,693,730,756,792,724,714,789,771,750,720,810,747,771,780,684,774,765,702,717,798,801,798,750,753,753,724,724,753,708];

/* volume */
V.forEach((t, i) => {
  const top = t / 3 + 330, h = 426 - top;
  if (cyanVol.has(i)) el('rect', { x: X(i) - 3.5, y: top, width: 7, height: h, fill: CY, 'shape-rendering': 'crispEdges' });
  else el('rect', { x: X(i) - 3.5, y: top, width: 7, height: h, fill: '#000', stroke: RED, 'shape-rendering': 'crispEdges' });
});
pl(poly([[55,282],[120,278],[180,274],[300,276],[400,275],[500,278],[560,272],[640,270],[720,270],[800,268],[860,270],[910,260],[960,250],[1020,242],[1060,225],[1090,190],[1130,183],[1170,178],[1200,198],[1250,222],[1300,218],[1340,212],[1400,228],[1450,245],[1568,248]],
  [[0,250],[60,245],[100,232],[160,230],[200,250],[280,255],[320,240],[370,210],[440,215],[470,245],[540,255],[640,255],[700,242],[800,235],[880,220],[950,210],[1010,208],[1040,165],[1100,155],[1130,190],[1180,237],[1250,222]], 330), '#ffff00');
pl(poly([[55,282],[300,278],[500,272],[860,270],[950,258],[1060,242],[1110,215],[1180,205],[1250,203],[1320,208],[1420,228],[1500,235],[1568,245]],
  [[0,248],[100,240],[230,245],[280,248],[360,233],[470,232],[560,250],[640,255],[800,240],[880,225],[1000,213],[1040,190],[1100,185],[1150,187],[1190,198],[1220,198],[1250,213]], 330), '#ff00ff');

/* DDX, DDY */
function bars(arr, base) {
  arr.forEach((v, i) => {
    const a = v / 3 + 330, b = base / 3 + 330;
    el('rect', { x: X(i) - 3.5, y: Math.min(a, b), width: 7.5, height: Math.max(Math.abs(a - b), .8), fill: v < base ? '#ff0000' : '#00ffff', 'shape-rendering': 'crispEdges' });
  });
}
bars(DX, 467);
pl(poly([[55,478],[110,475],[160,472],[190,463],[250,465],[330,470],[400,475],[480,468],[560,462],[650,464],[690,458],[720,470],[780,468],[810,480],[860,475],[890,465],[940,462],[990,460],[1010,430],[1055,440],[1075,433],[1100,465],[1130,485],[1160,500],[1210,497],[1230,517],[1260,512],[1298,530],[1330,480],[1400,475],[1450,495],[1510,470],[1530,485],[1568,480]],
  [[0,485],[50,475],[70,500],[105,510],[130,515],[160,540],[240,545],[265,548],[290,520],[330,490],[372,535],[460,530],[540,548],[590,490],[640,480],[700,460],[760,470],[800,487],[850,475],[880,505],[920,512],[960,490],[1000,495],[1030,450],[1085,490],[1110,497],[1140,490],[1165,525],[1205,508],[1250,548]], 330), '#ffff00');
bars(DY, 727);
pl(poly([[55,825],[95,802],[120,808],[165,785],[185,750],[250,722],[290,745],[320,730],[360,728],[385,760],[410,762],[440,757],[470,762],[500,738],[570,738],[610,716],[660,720],[690,722],[720,750],[770,750],[810,775],[845,788],[870,770],[920,778],[980,745],[1000,740],[1030,712],[1090,722],[1130,760],[1170,775],[1220,775],[1235,787],[1290,782],[1320,770],[1385,745],[1410,775],[1450,797],[1510,763],[1568,773]],
  [[0,775],[30,785],[60,775],[100,800],[130,815],[155,858],[180,860],[250,898],[280,885],[330,827],[370,823],[395,835],[440,825],[460,817],[490,843],[520,835],[545,865],[590,820],[630,820],[660,790],[700,770],[760,770],[800,800],[850,780],[870,815],[910,823],[950,805],[975,822],[1035,788],[1060,800],[1105,818],[1140,805],[1165,825],[1205,802],[1230,817],[1250,810]], 330), '#ffff00');

/* DDZ band */
const Z1 = [[55,1076,1076],[75,1038,1060],[85,1076,1076],[100,1095,1125],[120,1095,1125],[150,1076,1076],[165,1060,1070],[190,1076,1076],[225,1090,1118],[248,1078,1085],[300,1090,1115],[312,1076,1076],[313,1062,1076],[320,1076,1076],[333,1095,1180],[345,1076,1076],[356,1040,1070],[368,1076,1076],[398,1105,1145],[418,1078,1095],[440,1085,1100],[483,1076,1076],[504,1035,1062],[526,1072,1076],[547,1040,1065],[569,1076,1076],[590,1125,1208],[608,1076,1080],[615,1056,1070],[630,1076,1076],[635,1080,1088],[660,1076,1076],[690,1040,1068],[705,1040,1070],[712,1076,1076],[740,1090,1115],[760,1076,1076],[762,1032,1062],[780,1076,1076],[805,1100,1138],[830,1076,1100],[848,1045,1070],[860,1076,1076],[890,1100,1145],[905,1076,1076],[912,1052,1070],[925,1076,1076],[933,1080,1085],[942,1076,1076],[953,1038,1070],[968,1076,1076],[976,1080,1095],[990,1076,1076],[1003,1065,1072],[1020,1076,1076],[1040,1090,1112],[1062,1090,1112],[1078,1076,1076],[1084,1060,1072],[1095,1076,1076],[1125,1085,1100],[1150,1082,1095],[1160,1076,1076],[1168,1060,1072],[1180,1076,1076],[1190,1078,1078],[1210,1072,1076],[1228,1076,1076],[1275,1095,1122],[1295,1076,1076],[1320,1065,1073],[1325,1076,1076],[1340,1090,1105],[1385,1082,1098],[1405,1095,1115],[1450,1085,1098],[1470,1076,1076],[1510,1042,1072],[1522,1076,1076],[1533,1082,1096],[1550,1076,1080],[1556,1070,1076],[1568,1076,1076]];
const Z2 = [[0,1080,1088],[25,1072,1078],[50,1066,1074],[55,1076,1076],[95,1090,1118],[135,1080,1095],[158,1090,1135],[180,1076,1076],[205,1090,1122],[225,1085,1100],[245,1095,1132],[262,1076,1076],[270,1060,1072],[290,1076,1076],[320,1090,1118],[350,1090,1118],[390,1082,1102],[420,1085,1108],[445,1076,1112],[457,1040,1072],[465,1076,1076],[481,1095,1135],[510,1076,1076],[519,1062,1074],[527,1076,1076],[545,1080,1095],[567,1078,1092]];
const zz = Z1.map(p => [p[0] / 2.45, p[1] / 3 + 330, p[2] / 3 + 330]).concat(Z2.map(p => [640 + p[0] / 2.45, p[1] / 3 + 330, p[2] / 3 + 330]));
for (let i = 0; i < zz.length - 1; i++) {
  const a = zz[i], b = zz[i + 1];
  const red = (a[1] + b[1] + a[2] + b[2]) / 4 < 688.5;
  el('polygon', { points: `${a[0]},${a[1]} ${b[0]},${b[1]} ${b[0]},${b[2]} ${a[0]},${a[2]}`, fill: red ? '#e02030' : '#00d8e0' });
}

/* candles */
C.forEach((c, i) => {
  const x = Math.round(X(i)) + .5, t = c[1] / 3, b = c[2] / 3, wt = (c[3] === undefined ? c[1] : c[3]) / 3, wb = (c[4] === undefined ? c[2] : c[4]) / 3;
  if (c[0] === 'r') {
    if (wt < t) line(x, wt, x, t, RED);
    if (wb > b) line(x, b, x, wb, RED);
    el('rect', { x: x - 3, y: t, width: 6, height: Math.max(b - t, 1), fill: '#000', stroke: RED, 'shape-rendering': 'crispEdges' });
  } else if (c[0] === 'c') {
    line(x, wt, x, wb, CY);
    el('rect', { x: x - 3.5, y: t, width: 7, height: Math.max(b - t, 2), fill: CY, 'shape-rendering': 'crispEdges' });
  } else {
    line(x, wt, x, wb, '#fff');
    line(x - 3.5, t, x + 3.5, t, '#fff');
  }
});

/* moving averages */
pl(poly([[55,905],[120,898],[180,878],[260,868],[330,862],[400,856],[480,852],[560,832],[630,815],[700,802],[800,798],[890,790],[940,745],[1000,715],[1040,685],[1075,675],[1100,620],[1140,590],[1165,552],[1210,548],[1250,510],[1300,470],[1360,420],[1405,390],[1430,402],[1490,403],[1530,375],[1568,355]],
  [[0,350],[30,343],[60,350],[80,380],[130,470],[170,520],[240,583],[290,590],[310,570],[340,510],[370,470],[415,450],[460,490],[500,507],[560,507],[590,490],[650,478],[700,470],[750,440],[800,440],[845,428],[900,440],[950,430],[1000,410],[1035,330],[1080,288],[1115,300],[1150,370],[1185,380],[1250,335]], 0), '#ffffff');
pl(poly([[55,915],[150,903],[190,890],[260,875],[330,862],[400,857],[470,853],[560,840],[650,820],[720,805],[800,800],[900,792],[940,775],[1000,755],[1060,705],[1100,660],[1160,615],[1220,565],[1260,520],[1320,480],[1380,440],[1425,418],[1490,405],[1530,390],[1568,380]],
  [[0,372],[60,368],[100,385],[180,450],[240,530],[280,558],[310,558],[370,530],[410,515],[460,490],[520,483],[560,495],[620,495],[700,483],[780,455],[850,437],[930,440],[1000,418],[1040,380],[1100,352],[1135,338],[1180,333],[1210,327],[1250,335]], 0), '#ffff00');
pl(poly([[55,905],[150,903],[240,890],[330,882],[420,873],[500,860],[600,845],[700,828],[800,818],[900,800],[1000,778],[1060,755],[1130,710],[1200,675],[1260,620],[1300,600],[1380,535],[1420,500],[1500,460],[1568,425]],
  [[0,422],[40,402],[100,398],[170,408],[260,460],[320,472],[380,480],[440,500],[480,520],[560,518],[630,505],[700,480],[800,472],[900,462],[970,445],[1020,428],[1070,398],[1130,390],[1200,382],[1250,362]], 0), '#ff00ff');
pl(poly([[55,875],[170,878],[410,885],[580,882],[750,870],[1000,843],[1150,805],[1300,755],[1420,710],[1568,657]],
  [[0,655],[60,628],[150,605],[240,590],[340,565],[470,535],[560,518],[700,485],[850,465],[1000,452],[1100,446],[1250,440]], 0), '#00ff00');

/* price callouts */
text(1077, 69, '4.85', 't fa');
el('path', { d: 'M1063 58 L1075 63 M1063 58 L1067 57 M1063 58 L1065 62', stroke: '#c0c0c0', fill: 'none' });
text(36, 315, '2.64', 't fa');
el('path', { d: 'M34 309 H22 M22 309 L26 306 M22 309 L26 312', stroke: '#c0c0c0', fill: 'none' });

/* date row */
line(18, 750, 1232, 750, LINE);
[258, 441.6, 625, 783].forEach(x => line(Math.round(x) + .5, 734, Math.round(x) + .5, 750, LINE));
[106, 208, 349, 395, 487, 533, 578, 690, 826, 870].forEach(x => line(x + .5, 734, x + .5, 737, LINE));
text(22, 747, '2014年', 't fr-t');
text(260, 747, '8', 't fr-t'); text(444, 747, '9', 't fr-t'); text(627, 747, '10', 't fr-t'); text(785, 747, '11', 't fr-t');
el('rect', { x: 653, y: 735, width: 78, height: 15, fill: '#000080', stroke: LINE, 'shape-rendering': 'crispEdges' });
text(655, 746, '2014/10/13/一', 't fa');
text(1205, 747, '日线', 't fa');

/* ticks */
const TK = [
 ['14:59:38?||54|C','14:59:39|4.53|30|S','2||148|C','3||20|C','4|4.55|20|S','14:59:40||m2617|C','2||100|C','14:59:41||5|C','2||6|C','3|4.54|30|B','4||18|C','5||5|C','14:59:42|4.54|32|S'],
 ['2||32|C','3||1|C','4||148|C','5||3|C','14:59:43||20|C','14:59:44||20|C','2||10|C','14:59:45|4.54|19|B','2||1|C','3|4.52|26|S','14:59:46|4.54|m500|B','2|4.53|100|B','14:59:47||12|C'],
 ['2|4.53|8|S','14:59:48||20|C','2|4.85*|90|B','3|4.54|100|B','14:59:49|4.53|4|B','2||45|C','3|4.53|20|S','4|4.53|5|B','14:59:50||10|C','2|4.53|20|S','3|4.53|9|S','14:59:51||2|C','2|4.54|70|B'],
 ['3|4.54|20|B','14:59:52||2|C','2||2|C','3|4.53|1|B','4||5|C','14:59:53||15|C','2||1|C','3||20|C','4||1|C','14:59:55||20|C','2|4.53|1|B','3|4.54|10|S','14:59:56|4.56|50|B'],
 ['2||2|C','3|4.55|6|B','4||5|C','14:59:57|4.54|m3294|B','14:59:58||11|C','2||138|C','3||30|C','4|4.53|100|S','14:59:59||2|C','2||10|C','3||50|C','4|4.53|5|S','5|4.54|100|S']
];
const flagClass = { C: 'cg', S: 'cgn', B: 'cr' };
const hcol = document.getElementById('ticks');
function span(parent, cls, txt) { const s = document.createElement('span'); s.className = cls; s.textContent = txt; parent.appendChild(s); return s; }
TK.forEach(col => {
  const c = document.createElement('div'); c.className = 'tcol';
  col.forEach(row => {
    const [tm, pr, vol, fl] = row.split('|');
    const r = document.createElement('div'); r.className = 'tr';
    const q = tm.endsWith('?');
    const ts = span(r, 'tm' + (tm.includes(':') ? ' full' : ''), q ? tm.slice(0, -1) : tm);
    if (q) span(ts, 'mark', ' ?');
    const star = pr.endsWith('*');
    const ps = span(r, 'pr', star ? pr.slice(0, -1) : pr);
    if (star) span(ps, 'mark dot', ' •');
    const m = vol[0] === 'm';
    span(r, m ? 'cm' : flagClass[fl], m ? vol.slice(1) : vol);
    span(r, 'fl ' + flagClass[fl], fl);
    c.appendChild(r);
  });
  hcol.appendChild(c);
});
const qv = [190,20,20,80,15,50,22,25,20,9,4,12,10,5,5,20,40,4,24,10,10,5,10,2,10,2,50,446,20,20,20,8,40,3,5,15,188];
const qt = document.getElementById('qticks');
qv.forEach((v, i) => {
  const r = document.createElement('div'); r.className = 'qr';
  span(r, i ? 's' : 's full', i ? String(24 + i) : '15:00:17');
  span(r, 'p', '4.54'); span(r, 'v', String(v));
  qt.appendChild(r);
});

/* chip chart */
const chip = document.getElementById('chip');
function cp(pts, fill) {
  el('polygon', { points: pts.map(p => `${(1225 + p[0] / 3).toFixed(1)},${(90 + p[1] / 3).toFixed(1)}`).join(' '), fill, stroke: '#fff', 'stroke-width': 1, 'shape-rendering': 'crispEdges' }, undefined, chip);
}
text(1235, 33, '000036', 'mono fy', chip);
cp([[22,40],[50,40],[90,43],[145,46],[22,48]], '#fff');
cp([[22,52],[280,52],[365,60],[285,65],[280,72],[150,75],[330,82],[480,94],[380,100],[520,100],[685,112],[740,121],[660,130],[640,140],[480,150],[240,175],[190,170],[22,100]], '#fff');
cp([[22,78],[120,88],[220,95],[310,103],[450,113],[420,130],[290,143],[190,157],[190,165],[240,183],[218,190],[225,210],[260,222],[250,238],[325,252],[305,258],[330,275],[335,288],[290,282],[235,268],[240,250],[150,238],[60,220],[22,205]], '#ff8080');
cp([[450,122],[480,110],[680,118],[660,128],[640,140],[480,150],[340,158],[190,172],[185,157],[290,140],[420,130]], '#ff0000');
cp([[22,205],[60,220],[150,238],[240,250],[235,268],[290,282],[330,290],[370,305],[270,315],[130,330],[140,340],[190,348],[195,360],[160,380],[155,395],[195,410],[130,425],[125,435],[100,415],[60,405],[40,380],[22,360]], '#ff0080');
cp([[125,445],[180,450],[270,460],[195,465],[150,452]], '#ff0080');
cp([[300,533],[530,533],[350,540]], '#fff');
cp([[330,560],[480,562],[350,568]], '#fff');
cp([[22,360],[48,395],[70,415],[60,430],[60,460],[120,490],[130,510],[125,520],[190,530],[250,548],[300,560],[250,560],[210,575],[180,590],[180,610],[200,635],[110,635],[60,642],[22,655]], '#ffff00');
cp([[100,415],[125,438],[125,445],[160,470],[140,470],[165,482],[155,492],[210,497],[300,508],[340,515],[405,520],[440,530],[415,540],[370,555],[325,558],[250,545],[190,525],[130,510],[120,490],[60,458],[70,425]], '#ff8000');
cp([[250,565],[385,575],[320,587],[290,575]], '#ff8000');
cp([[210,572],[250,568],[300,590],[330,605],[440,628],[300,628],[190,635],[205,620],[175,612],[205,600],[180,590]], '#ffff80');
cp([[60,642],[110,635],[180,642],[60,647],[22,665],[22,655]], '#fff');
/* small icons above the chip chart */
[['M1370 23H1377M1370 26H1382M1370 29H1376M1370 32H1373M1370 35H1372', '#00c000']].forEach(a =>
  el('path', { d: a[0], stroke: a[1], 'stroke-width': 2, fill: 'none', 'shape-rendering': 'crispEdges' }, undefined, chip));
el('path', { d: 'M1370 32H1373M1370 35H1372', stroke: '#e00000', 'stroke-width': 2, 'shape-rendering': 'crispEdges' }, undefined, chip);
el('rect', { x: 1384, y: 21.5, width: 16, height: 17, fill: '#000', stroke: '#ff2020', 'shape-rendering': 'crispEdges' }, undefined, chip);
el('path', { d: 'M1387 24 L1398 31 L1387 37Z', fill: '#ff2020' }, undefined, chip);
el('path', { d: 'M1389 28 L1395 31 L1389 34Z', fill: '#ffff00' }, undefined, chip);
el('path', { d: 'M1404 23 L1417 31 L1404 39Z', fill: '#0000c0' }, undefined, chip);
el('path', { d: 'M1409 27 L1417 31 L1409 35Z', fill: '#00e000' }, undefined, chip);
el('rect', { x: 1421, y: 22, width: 18, height: 17, fill: '#000080' }, undefined, chip);
el('rect', { x: 1423, y: 27, width: 8, height: 6, fill: '#00e0e0' }, undefined, chip);
el('rect', { x: 1431, y: 24, width: 6, height: 6, fill: '#f0e040' }, undefined, chip);
el('rect', { x: 1426, y: 34, width: 11, height: 3, fill: '#c0c0c0' }, undefined, chip);

/* F10 mini bars */
const mini = document.getElementById('mini');
line(1733.5, 57, 1733.5, 146, '#2a2a2a', {}, mini);
line(1733, 145.5, 1890, 145.5, '#2a2a2a', {}, mini);
[[75, '5.23'], [98.5, '3.49'], [121, '1.74'], [146, '0.00']].forEach(a => text(1709, a[0] + 4, a[1], 'minit', mini));
[[1748, '2012'], [1800, '2013'], [1853, '2014']].forEach(a => text(a[0], 160, a[1], 'minit', mini));
[[821,292],[847,412],[873,425],[895,370],[983,429],[1003,429],[1028,187],[1055,367]].forEach(b => {
  el('rect', { x: 1470 + b[0] / 3, y: b[1] / 3, width: 5.4, height: 145 - b[1] / 3, fill: '#ff4000', 'shape-rendering': 'crispEdges' }, undefined, mini);
});
```
